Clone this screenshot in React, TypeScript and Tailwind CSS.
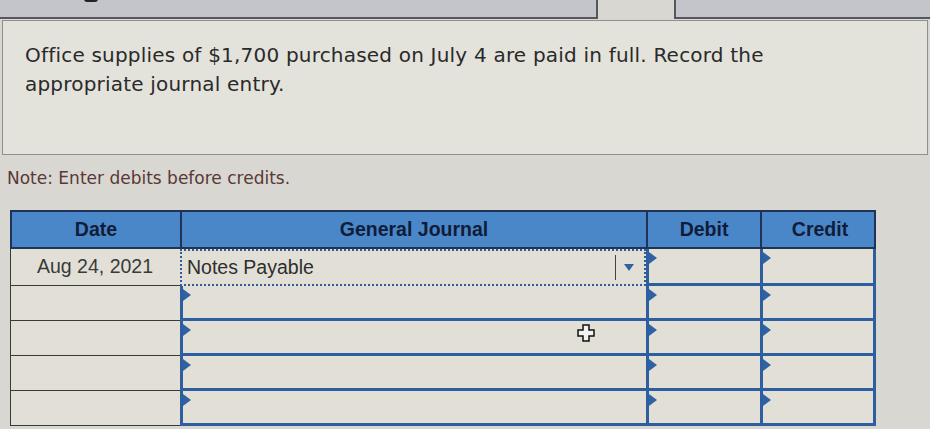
import React from 'react';

const rows = [0, 1, 2, 3, 4];

const Marker = () => (
    <svg className="absolute left-0 top-[3px]" width="9" height="12" viewBox="0 0 9 12">
        <path d="M0 0 L8 6 L0 12 Z" fill="#2f62a3" />
    </svg>
);

const CursorPlus = () => (
    <svg className="absolute left-[577px] top-[324px]" width="18" height="18" viewBox="0 0 18 18">
        <path d="M6 1 H12 V6 H17 V12 H12 V17 H6 V12 H1 V6 H6 Z" fill="#f2f2f2" stroke="#111" strokeWidth="1.5" />
    </svg>
);

const App = () => {
    return (
        <div className="relative w-[930px] h-[429px] overflow-hidden bg-[#d8d7d1]" style={{ fontFamily: '"Liberation Sans", Arial, sans-serif' }}>
            {/* top tabs, cut off */}
            <div className="flex h-[19px]">
                <div className="w-[598px] bg-[#c3c5ca] border-b-2 border-r-2 border-[#55575c] relative">
                    <div className="absolute left-[84px] -top-[4px] w-[14px] h-[6px] rounded-full bg-[#222]" />
                </div>
                <div className="w-[76px]" />
                <div className="flex-1 bg-[#c3c5ca] border-b-2 border-l-2 border-[#55575c]" />
            </div>

            {/* question box */}
            <div className="mx-[2px] mt-[1px] h-[135px] bg-[#e3e2db] border border-[#8f8f8c] px-[22px] pt-[20px]">
                <p className="text-[20px] leading-[29px] text-[#2a2a2a] tracking-[0.2px]" style={{ fontFamily: '"DejaVu Sans", Verdana, sans-serif' }}>
                    Office supplies of $1,700 purchased on July 4 are paid in full. Record the
                    <br />
                    appropriate journal entry.
                </p>
            </div>

            {/* note */}
            <p className="mt-[12px] ml-[7px] text-[17px] leading-[22px] text-[#5a3838]" style={{ fontFamily: '"DejaVu Sans", Verdana, sans-serif' }}>
                Note: Enter debits before credits.
            </p>

            {/* journal table */}
            <div className="ml-[10px] mt-[21px] w-[866px]">
                <div className="grid grid-cols-[170px_466px_114px_116px] h-[39px] bg-[#4a87c8] border-2 border-[#1e3356] text-[19.5px] font-bold text-[#101c38]">
                    <div className="flex items-center justify-center border-r-2 border-[#1e3356]">Date</div>
                    <div className="flex items-center justify-center border-r-2 border-[#1e3356]">General Journal</div>
                    <div className="flex items-center justify-center border-r-2 border-[#1e3356]">Debit</div>
                    <div className="flex items-center justify-center">Credit</div>
                </div>

                {rows.map((r) => (
                    <div key={r} className={`grid grid-cols-[170px_466px_114px_116px] bg-[#e2e0d6] ${r === 0 ? 'h-[37px]' : 'h-[35px]'}`}>
                        <div className="flex items-center pl-[26px] border-l border-b border-[#3a3a36] text-[19.5px] text-[#3a3a3a]">
                            {r === 0 ? 'Aug 24, 2021' : ''}
                        </div>
                        {r === 0 ? (
                            <div className="relative flex items-center border-2 border-dotted border-[#2f5d98] pl-[5px]">
                                <span className="text-[19.5px] text-[#2e2e2e]">Notes Payable</span>
                                <div className="absolute right-[28px] top-[4px] bottom-[4px] w-px bg-[#444]" />
                                <svg className="absolute right-[10px] top-[13px]" width="10" height="7" viewBox="0 0 10 7">
                                    <path d="M0 0 H10 L5 7 Z" fill="#2f62a3" />
                                </svg>
                            </div>
                        ) : (
                            <div className="relative border-l-[3px] border-b-[3px] border-[#2d5e9f]">
                                <Marker />
                            </div>
                        )}
                        <div className="relative border-l-[3px] border-b-[3px] border-[#2d5e9f]">
                            <Marker />
                        </div>
                        <div className="relative border-l-[3px] border-r-[3px] border-b-[3px] border-[#2d5e9f]">
                            <Marker />
                        </div>
                    </div>
                ))}
            </div>

            <CursorPlus />
        </div>
    );
};

export default App;
